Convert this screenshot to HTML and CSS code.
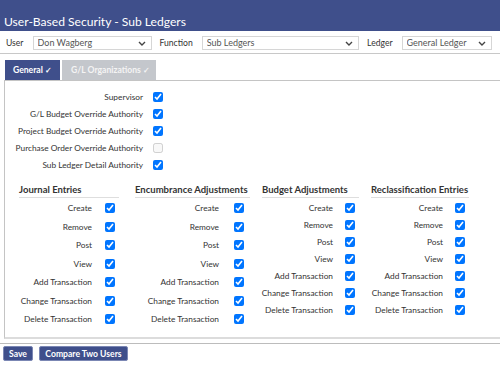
FILE: index.html
```html
<!DOCTYPE html>
<html lang="en">
<head>
    <title>User-Based Security - Sub Ledgers</title>
    <meta charset="utf-8" />
    <link rel="stylesheet" href="styles.css">
</head>
<body>
    <div class="title">User-Based Security - Sub Ledgers</div>

    <div class="filters">
        <label class="filter-label">User</label>
        <span class="select-wrap user-select">
            <select><option>Don Wagberg</option></select>
            <svg class="chevron" width="8" height="5" viewBox="0 0 8 5"><path d="M1 1l3 3 3-3" fill="none" stroke="#444" stroke-width="1.4"/></svg>
        </span>
        <label class="filter-label">Function</label>
        <span class="select-wrap function-select">
            <select><option>Sub Ledgers</option></select>
            <svg class="chevron" width="8" height="5" viewBox="0 0 8 5"><path d="M1 1l3 3 3-3" fill="none" stroke="#444" stroke-width="1.4"/></svg>
        </span>
        <label class="filter-label">Ledger</label>
        <span class="select-wrap ledger-select">
            <select><option>General Ledger</option></select>
            <svg class="chevron" width="8" height="5" viewBox="0 0 8 5"><path d="M1 1l3 3 3-3" fill="none" stroke="#444" stroke-width="1.4"/></svg>
        </span>
    </div>

    <div class="tabs">
        <div class="tab active">General <span class="tick">&#10003;</span></div>
        <div class="tab orgs">G/L Organizations <span class="tick">&#10003;</span></div>
    </div>

    <div class="panel">
        <div class="flags">
            <span class="flag-label">Supervisor</span><input type="checkbox" checked>
            <span class="flag-label">G/L Budget Override Authority</span><input type="checkbox" checked>
            <span class="flag-label">Project Budget Override Authority</span><input type="checkbox" checked>
            <span class="flag-label">Purchase Order Override Authority</span><input type="checkbox" disabled>
            <span class="flag-label">Sub Ledger Detail Authority</span><input type="checkbox" checked>
        </div>

        <div class="groups">
            <div class="group journal">
                <div class="group-title">Journal Entries</div>
                <div class="row"><span>Create</span><input type="checkbox" checked></div>
                <div class="row"><span>Remove</span><input type="checkbox" checked></div>
                <div class="row"><span>Post</span><input type="checkbox" checked></div>
                <div class="row"><span>View</span><input type="checkbox" checked></div>
                <div class="row"><span>Add Transaction</span><input type="checkbox" checked></div>
                <div class="row"><span>Change Transaction</span><input type="checkbox" checked></div>
                <div class="row"><span>Delete Transaction</span><input type="checkbox" checked></div>
            </div>
            <div class="group encumbrance">
                <div class="group-title">Encumbrance Adjustments</div>
                <div class="row"><span>Create</span><input type="checkbox" checked></div>
                <div class="row"><span>Remove</span><input type="checkbox" checked></div>
                <div class="row"><span>Post</span><input type="checkbox" checked></div>
                <div class="row"><span>View</span><input type="checkbox" checked></div>
                <div class="row"><span>Add Transaction</span><input type="checkbox" checked></div>
                <div class="row"><span>Change Transaction</span><input type="checkbox" checked></div>
                <div class="row"><span>Delete Transaction</span><input type="checkbox" checked></div>
            </div>
            <div class="group budget compact">
                <div class="group-title">Budget Adjustments</div>
                <div class="row"><span>Create</span><input type="checkbox" checked></div>
                <div class="row"><span>Remove</span><input type="checkbox" checked></div>
                <div class="row"><span>Post</span><input type="checkbox" checked></div>
                <div class="row"><span>View</span><input type="checkbox" checked></div>
                <div class="row"><span>Add Transaction</span><input type="checkbox" checked></div>
                <div class="row"><span>Change Transaction</span><input type="checkbox" checked></div>
                <div class="row"><span>Delete Transaction</span><input type="checkbox" checked></div>
            </div>
            <div class="group reclass compact">
                <div class="group-title">Reclassification Entries</div>
                <div class="row"><span>Create</span><input type="checkbox" checked></div>
                <div class="row"><span>Remove</span><input type="checkbox" checked></div>
                <div class="row"><span>Post</span><input type="checkbox" checked></div>
                <div class="row"><span>View</span><input type="checkbox" checked></div>
                <div class="row"><span>Add Transaction</span><input type="checkbox" checked></div>
                <div class="row"><span>Change Transaction</span><input type="checkbox" checked></div>
                <div class="row"><span>Delete Transaction</span><input type="checkbox" checked></div>
            </div>
        </div>
    </div>

    <div class="actions">
        <button class="btn save">Save</button>
        <button class="btn compare">Compare Two Users</button>
    </div>
</body>
</html>
```

FILE: styles.css
```css
body {
    margin: 0;
    font-family: Lato, "Noto Sans", sans-serif;
    font-size: 8.3px;
    color: #333;
    background: #fff;
    overflow: hidden;
}
.title {
    height: 31px;
    box-sizing: border-box;
    padding: 15px 0 0 4px;
    background-color: #3f4f8b;
    color: #fff;
    font-size: 12.1px;
    line-height: 14px;
}
.filters {
    display: flex;
    align-items: center;
    height: 21px;
    margin-top: 1px;
    padding-left: 6px;
    border-bottom: 1px solid #c8c8c8;
}
.filter-label {
    margin-right: 9px;
    font-size: 8.6px;
    color: #333;
}
.select-wrap {
    position: relative;
    display: inline-block;
    height: 14px;
    margin-right: 8px;
}
.select-wrap select {
    appearance: none;
    width: 100%;
    height: 14px;
    margin: 0;
    padding: 0 0 0 4px;
    border: 1px solid #d6d6d6;
    border-radius: 0;
    background: #fff;
    font-family: inherit;
    font-size: 9px;
    line-height: 12px;
    color: #555;
}
.chevron {
    position: absolute;
    right: 6px;
    top: 5px;
}
.user-select { width: 121px; }
.function-select { width: 160px; }
.ledger-select { width: 92px; }

.tabs {
    display: flex;
    gap: 2px;
    margin-top: 6px;
    padding-left: 5px;
}
.tab {
    width: 55px;
    height: 20px;
    box-sizing: border-box;
    padding-left: 8px;
    line-height: 21px;
    font-size: 8.6px;
    font-weight: bold;
    color: #f4f4f4;
    background-color: #c4c7cc;
    white-space: nowrap;
}
.tab.active {
    background-color: #3f4f8b;
    color: #fff;
}
.tab.orgs {
    width: 94px;
    padding-left: 9px;
}
.tick {
    font-size: 7.5px;
}

.panel {
    height: 256px;
    margin-left: 4px;
    border-top: 1px solid #c4c4c4;
    border-left: 1px solid #c4c4c4;
    border-bottom: 2px solid #dcdcdc;
}
.flags {
    display: grid;
    grid-template-columns: 138px 10px;
    grid-auto-rows: 17px;
    column-gap: 10px;
    align-items: center;
    padding-top: 7px;
}
.flag-label {
    text-align: right;
    white-space: nowrap;
}
input[type="checkbox"] {
    width: 10px;
    height: 10px;
    margin: 0;
    flex: none;
}

.groups {
    display: flex;
    gap: 12px;
    margin-top: 11px;
    padding-left: 14px;
}
.group-title {
    font-size: 9.5px;
    font-weight: bold;
    line-height: 12px;
    padding-bottom: 1px;
    border-bottom: 1px solid #dedede;
    margin-bottom: 1px;
    white-space: nowrap;
}
.row {
    display: flex;
    justify-content: flex-end;
    align-items: center;
    gap: 13px;
    height: 18.5px;
    padding-right: 4px;
    white-space: nowrap;
}
.compact .row {
    height: 17px;
    gap: 12px;
}
.journal { width: 100px; margin-right: 4px; }
.encumbrance { width: 115px; }
.encumbrance .row { padding-right: 6px; gap: 15px; }
.budget { width: 97px; }
.reclass { width: 98px; }

.actions {
    display: flex;
    gap: 6px;
    margin-top: 4px;
    padding: 2px 0 0 3px;
    border-top: 1px solid #bcbcbc;
}
.btn {
    height: 15px;
    padding: 0;
    border: 1px solid #7b87b4;
    border-radius: 2px;
    background-color: #3f4f8b;
    color: #fff;
    font-family: inherit;
    font-size: 8.6px;
    font-weight: bold;
    line-height: 12px;
    white-space: nowrap;
}
.save { width: 30px; }
.compare { width: 89px; }
```
